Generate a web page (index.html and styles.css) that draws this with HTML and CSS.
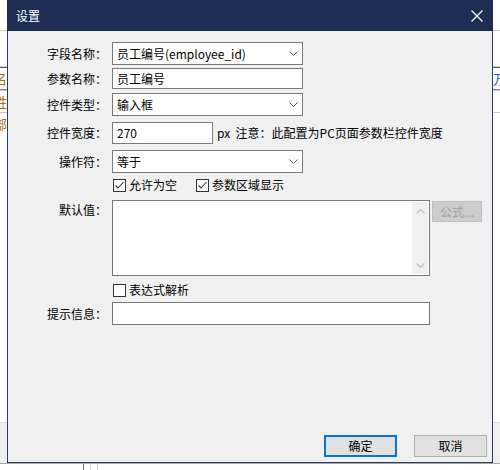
FILE: index.html
```html
<!DOCTYPE html>
<html>
<head>
<meta charset="utf-8">
<link rel="stylesheet" href="styles.css">
</head>
<body>
<div class="page">
  <div class="page-top"></div>
  <div class="page-table">
    <div class="pt-row pt-head"><span class="pt-cell-l">名</span><span class="pt-cell-r">万</span></div>
    <div class="pt-row"><span class="pt-cell-l">姓</span><span class="pt-cell-r"></span></div>
    <div class="pt-row"><span class="pt-cell-l">部</span><span class="pt-cell-r"></span></div>
  </div>
  <div class="page-fill"></div>
  <div class="page-bottom"></div>
  <div class="page-foot">
    <span class="pf-line"></span><span class="pf-line light"></span><span class="pf-line light"></span>
  </div>
</div>

<div class="dialog">
  <div class="titlebar">
    <span class="title">设置</span>
    <svg class="close" width="12" height="12" viewBox="0 0 12 12"><path d="M0.5 0.5 L11.5 11.5 M11.5 0.5 L0.5 11.5" stroke="#ffffff" stroke-width="1.2" fill="none"/></svg>
  </div>
  <div class="body">
    <div class="row r1">
      <span class="lbl">字段名称：</span>
      <div class="select"><span>员工编号(employee_id)</span><svg class="chev" width="9" height="5" viewBox="0 0 9 5"><path d="M0.5 0.5 L4.5 4.5 L8.5 0.5" stroke="#555" stroke-width="1" fill="none"/></svg></div>
    </div>
    <div class="row r2">
      <span class="lbl">参数名称：</span>
      <div class="input w191">员工编号</div>
    </div>
    <div class="row r3">
      <span class="lbl">控件类型：</span>
      <div class="select"><span>输入框</span><svg class="chev" width="9" height="5" viewBox="0 0 9 5"><path d="M0.5 0.5 L4.5 4.5 L8.5 0.5" stroke="#555" stroke-width="1" fill="none"/></svg></div>
    </div>
    <div class="row r4">
      <span class="lbl">控件宽度：</span>
      <div class="input w101 h22">270</div>
      <span class="note">px&nbsp; 注意：此配置为PC页面参数栏控件宽度</span>
    </div>
    <div class="row r5">
      <span class="lbl">操作符：</span>
      <div class="select"><span>等于</span><svg class="chev" width="9" height="5" viewBox="0 0 9 5"><path d="M0.5 0.5 L4.5 4.5 L8.5 0.5" stroke="#555" stroke-width="1" fill="none"/></svg></div>
    </div>
    <div class="row r6">
      <span class="lbl"></span>
      <span class="check first"><span class="box"><svg width="11" height="11" viewBox="0 0 11 11"><path d="M1.5 5.5 L4 8 L9.5 2" stroke="#333" stroke-width="1.1" fill="none"/></svg></span>允许为空</span>
      <span class="check"><span class="box"><svg width="11" height="11" viewBox="0 0 11 11"><path d="M1.5 5.5 L4 8 L9.5 2" stroke="#333" stroke-width="1.1" fill="none"/></svg></span>参数区域显示</span>
    </div>
    <div class="row r7">
      <span class="lbl top">默认值：</span>
      <div class="textarea">
        <div class="ta-content"></div>
        <div class="scrollbar">
          <svg width="9" height="5" viewBox="0 0 9 5"><path d="M0.5 4.5 L4.5 0.5 L8.5 4.5" stroke="#c2c2c2" stroke-width="1.3" fill="none"/></svg>
          <svg width="9" height="5" viewBox="0 0 9 5"><path d="M0.5 0.5 L4.5 4.5 L8.5 0.5" stroke="#c2c2c2" stroke-width="1.3" fill="none"/></svg>
        </div>
      </div>
      <span class="formula">公式...</span>
    </div>
    <div class="row r8">
      <span class="lbl"></span>
      <span class="check"><span class="box"></span>表达式解析</span>
    </div>
    <div class="row r9">
      <span class="lbl">提示信息：</span>
      <div class="input w318 h23"></div>
    </div>
  </div>
  <div class="footer">
    <button class="btn primary">确定</button>
    <button class="btn">取消</button>
  </div>
</div>
</body>
</html>
```

FILE: styles.css
```css
html, body {
  margin: 0;
  padding: 0;
}
body {
  width: 500px;
  height: 470px;
  overflow: hidden;
  position: relative;
  background: #ffffff;
  font-family: "Noto Sans CJK SC", "Microsoft YaHei", sans-serif;
  font-size: 12px;
  color: #000;
}

/* background page */
.page {
  height: 470px;
  display: flex;
  flex-direction: column;
}
.page-top {
  height: 30px;
  border-bottom: 1px solid #c9c9c9;
  flex: none;
}
.page-table {
  margin-top: 35px;
  border-top: 1px solid #d5d5d5;
  flex: none;
}
.pt-row {
  height: 21px;
  display: flex;
  justify-content: space-between;
  align-items: center;
  border-top: 1px solid #555;
  line-height: 20px;
  font-size: 13px;
  color: #333;
}
.pt-row + .pt-row {
  border-top: 1px solid #c8c8c8;
}
.pt-head {
  border-bottom: 1px solid #888;
}
.pt-cell-l {
  margin-left: -6px;
  color: #b06a10;
}
.pt-cell-r {
  margin-right: -6px;
  color: #2a5bb8;
}
.page-fill {
  flex: 1;
}
.page-bottom {
  height: 40px;
  flex: none;
  background: #f0f0f0;
  border-top: 1px solid #dcdcdc;
  border-bottom: 1px solid #a8a8a8;
}
.page-foot {
  height: 6px;
  flex: none;
  display: flex;
  padding-left: 83px;
  gap: 6px;
}
.pf-line {
  width: 1px;
  height: 6px;
  background: #7a7a7a;
}
.pf-line.light {
  background: #d0d0d0;
}

/* dialog window */
.dialog {
  position: absolute;
  left: 7px;
  top: 0;
  width: 486px;
  height: 463px;
  box-sizing: border-box;
  border: 1px solid #2c3b62;
  border-top: none;
  background: #f0f0f0;
  display: flex;
  flex-direction: column;
}
.titlebar {
  height: 31px;
  flex: none;
  margin: 0 -1px;
  background: #1f2d54;
  display: flex;
  align-items: center;
  justify-content: space-between;
  padding: 0 10px 0 9px;
}
.title {
  color: #ffffff;
  font-size: 12px;
  line-height: 16px;
}
.close {
  display: block;
}

.body {
  flex: 1;
  padding-top: 11px;
  display: flex;
  flex-direction: column;
}
.row {
  display: flex;
  align-items: center;
}
.lbl {
  width: 99px;
  flex: none;
  text-align: right;
  margin-right: 5px;
  line-height: 16px;
  color: #000;
}
.lbl.top {
  align-self: flex-start;
  padding-top: 2px;
}
.r2 { margin-top: 3px; }
.r3 { margin-top: 4px; }
.r4 { margin-top: 6px; }
.r5 { margin-top: 6px; }
.r6 { margin-top: 3px; height: 18px; }
.r7 { margin-top: 6px; align-items: flex-start; }
.r8 { margin-top: 5px; height: 18px; }
.r9 { margin-top: 3px; }

.select {
  width: 191px;
  height: 23px;
  box-sizing: border-box;
  border: 1px solid #7a7a7a;
  background: #ffffff;
  display: flex;
  align-items: center;
  justify-content: space-between;
  padding: 0 4px 0 4px;
  line-height: 16px;
}
.chev {
  display: block;
}
.input {
  height: 21px;
  box-sizing: border-box;
  border: 1px solid #7a7a7a;
  background: #ffffff;
  padding: 0 4px;
  display: flex;
  align-items: center;
  line-height: 16px;
}
.w191 { width: 191px; }
.w101 { width: 101px; }
.w318 { width: 318px; }
.h22 { height: 22px; }
.h23 { height: 23px; }
.note {
  margin-left: 4px;
  line-height: 16px;
}

.check {
  display: flex;
  align-items: center;
  line-height: 16px;
}
.check.first {
  margin-right: 18px;
}
.box {
  width: 13px;
  height: 13px;
  box-sizing: border-box;
  border: 1px solid #333333;
  background: #ffffff;
  margin-left: 1px;
  margin-right: 3px;
  display: flex;
  align-items: center;
  justify-content: center;
}
.box svg {
  display: block;
}

.textarea {
  width: 318px;
  height: 76px;
  box-sizing: border-box;
  border: 1px solid #7a7a7a;
  background: #ffffff;
  display: flex;
  padding: 1px;
}
.ta-content {
  flex: 1;
}
.scrollbar {
  width: 16px;
  background: #f0f0f0;
  display: flex;
  flex-direction: column;
  justify-content: space-between;
  align-items: center;
  padding: 7px 0 6px;
}
.scrollbar svg {
  display: block;
}
.formula {
  margin-left: 2px;
  margin-top: 1px;
  width: 50px;
  height: 21px;
  box-sizing: border-box;
  background: #cccccc;
  border: 1px solid #bfbfbf;
  color: #a3a3a3;
  display: flex;
  align-items: center;
  justify-content: center;
  line-height: 16px;
}

.footer {
  flex: none;
  display: flex;
  justify-content: flex-end;
  gap: 17px;
  padding: 0 5px 5px 0;
}
.btn {
  width: 73px;
  height: 22px;
  box-sizing: border-box;
  background: #e1e1e1;
  border: 1px solid #adadad;
  font-family: "Noto Sans CJK SC", "Microsoft YaHei", sans-serif;
  font-size: 12px;
  line-height: 16px;
  color: #000;
  padding: 0;
  margin: 0;
}
.btn.primary {
  border: 2px solid #0078d7;
}
```
